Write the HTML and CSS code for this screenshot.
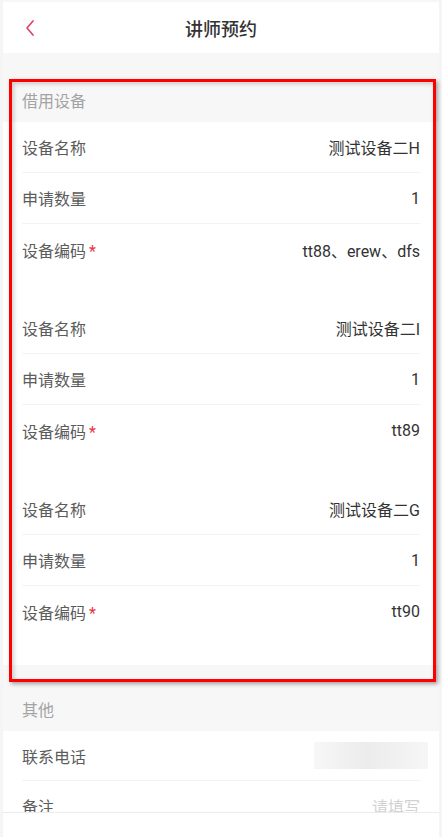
FILE: index.html
```html
<!DOCTYPE html>
<html lang="zh-CN">
<head>
    <meta charset="UTF-8">
    <meta name="viewport" content="width=device-width, initial-scale=1.0">
    <title>讲师预约</title>
    <link rel="stylesheet" href="styles.css">
</head>
<body>

    <div class="page">
        <div class="header">
            <a class="back-btn" href="#">
                <svg width="12" height="18" viewBox="0 0 12 18">
                    <polyline points="9,2 3,9 9,16" fill="none" stroke="#d9486c" stroke-width="1.7" stroke-linecap="round" stroke-linejoin="round"/>
                </svg>
            </a>
            <h1>讲师预约</h1>
        </div>

        <div class="section section-first">
            <div class="section-title">借用设备</div>
            <div class="section-body">
                <div class="group">
                    <div class="row"><span class="label">设备名称</span><span class="value">测试设备二H</span></div>
                    <div class="row"><span class="label">申请数量</span><span class="value">1</span></div>
                    <div class="row"><span class="label">设备编码<i class="req">*</i></span><span class="value">tt88、erew、dfs</span></div>
                </div>
                <div class="group">
                    <div class="row"><span class="label">设备名称</span><span class="value">测试设备二I</span></div>
                    <div class="row"><span class="label">申请数量</span><span class="value">1</span></div>
                    <div class="row"><span class="label">设备编码<i class="req">*</i></span><span class="value">tt89</span></div>
                </div>
                <div class="group">
                    <div class="row"><span class="label">设备名称</span><span class="value">测试设备二G</span></div>
                    <div class="row"><span class="label">申请数量</span><span class="value">1</span></div>
                    <div class="row"><span class="label">设备编码<i class="req">*</i></span><span class="value">tt90</span></div>
                </div>
            </div>
        </div>

        <div class="section section-other">
            <div class="section-title">其他</div>
            <div class="section-body">
                <div class="row"><span class="label">联系电话</span><span class="blurred"></span></div>
                <div class="row"><span class="label">备注</span><span class="placeholder">请填写</span></div>
            </div>
        </div>

        <div class="footer"></div>
    </div>

    <!-- highlight box drawn over the device list -->
    <div class="highlight"></div>

</body>
</html>
```

FILE: styles.css
```css
body {
    font-family: Roboto, "Noto Sans CJK SC", sans-serif;
    background-color: #f5f5f5;
    margin: 0;
    padding: 0;
    height: 837px;
    overflow: hidden;
}
.page {
    margin: 0 3px;
    padding-top: 2px;
    background: #f7f7f7;
    min-height: 835px;
}
.header {
    position: relative;
    height: 51px;
    background: white;
    display: flex;
    align-items: center;
    justify-content: center;
}
.header h1 {
    margin: 0;
    font-size: 18px;
    font-weight: 500;
    color: #333;
}
.back-btn {
    position: absolute;
    left: 21px;
    top: 17px;
    display: flex;
}
.section-first {
    margin-top: 29px;
}
.section-other {
    margin-top: 26px;
}
.section-title {
    height: 40px;
    line-height: 40px;
    padding: 0 19px;
    font-size: 16px;
    color: #a3a3a3;
}
.section-body {
    background: white;
}
.section-first .section-body {
    padding-bottom: 0;
}
.group {
    padding-bottom: 28px;
}
.row {
    height: 51px;
    margin: 0 19px;
    display: flex;
    align-items: center;
    justify-content: space-between;
    border-bottom: 1px solid #f3f3f3;
    box-sizing: border-box;
    font-size: 16px;
}
.group .row:last-child {
    border-bottom: none;
}
.section-other .row {
    height: 50px;
}
.label {
    color: #5c5c5c;
}
.req {
    font-style: normal;
    color: #e8343f;
    margin-left: 3px;
}
.value {
    color: #333;
}
.placeholder {
    color: #d2d2d2;
}
.blurred {
    width: 114px;
    height: 27px;
    margin-right: -8px;
    background: linear-gradient(90deg, #f7f7f7, #ececec 45%, #f0f0f0 70%, #f6f6f6);
}
.footer {
    position: fixed;
    left: 3px;
    right: 3px;
    bottom: 0;
    height: 24px;
    background: white;
    border-top: 1px solid #ececec;
}
.highlight {
    position: absolute;
    left: 9px;
    top: 79px;
    width: 421px;
    height: 597px;
    border: 3px solid #f00;
    box-shadow: 2px 2px 4px rgba(0,0,0,0.35), inset 2px 2px 4px rgba(0,0,0,0.18);
}
```
